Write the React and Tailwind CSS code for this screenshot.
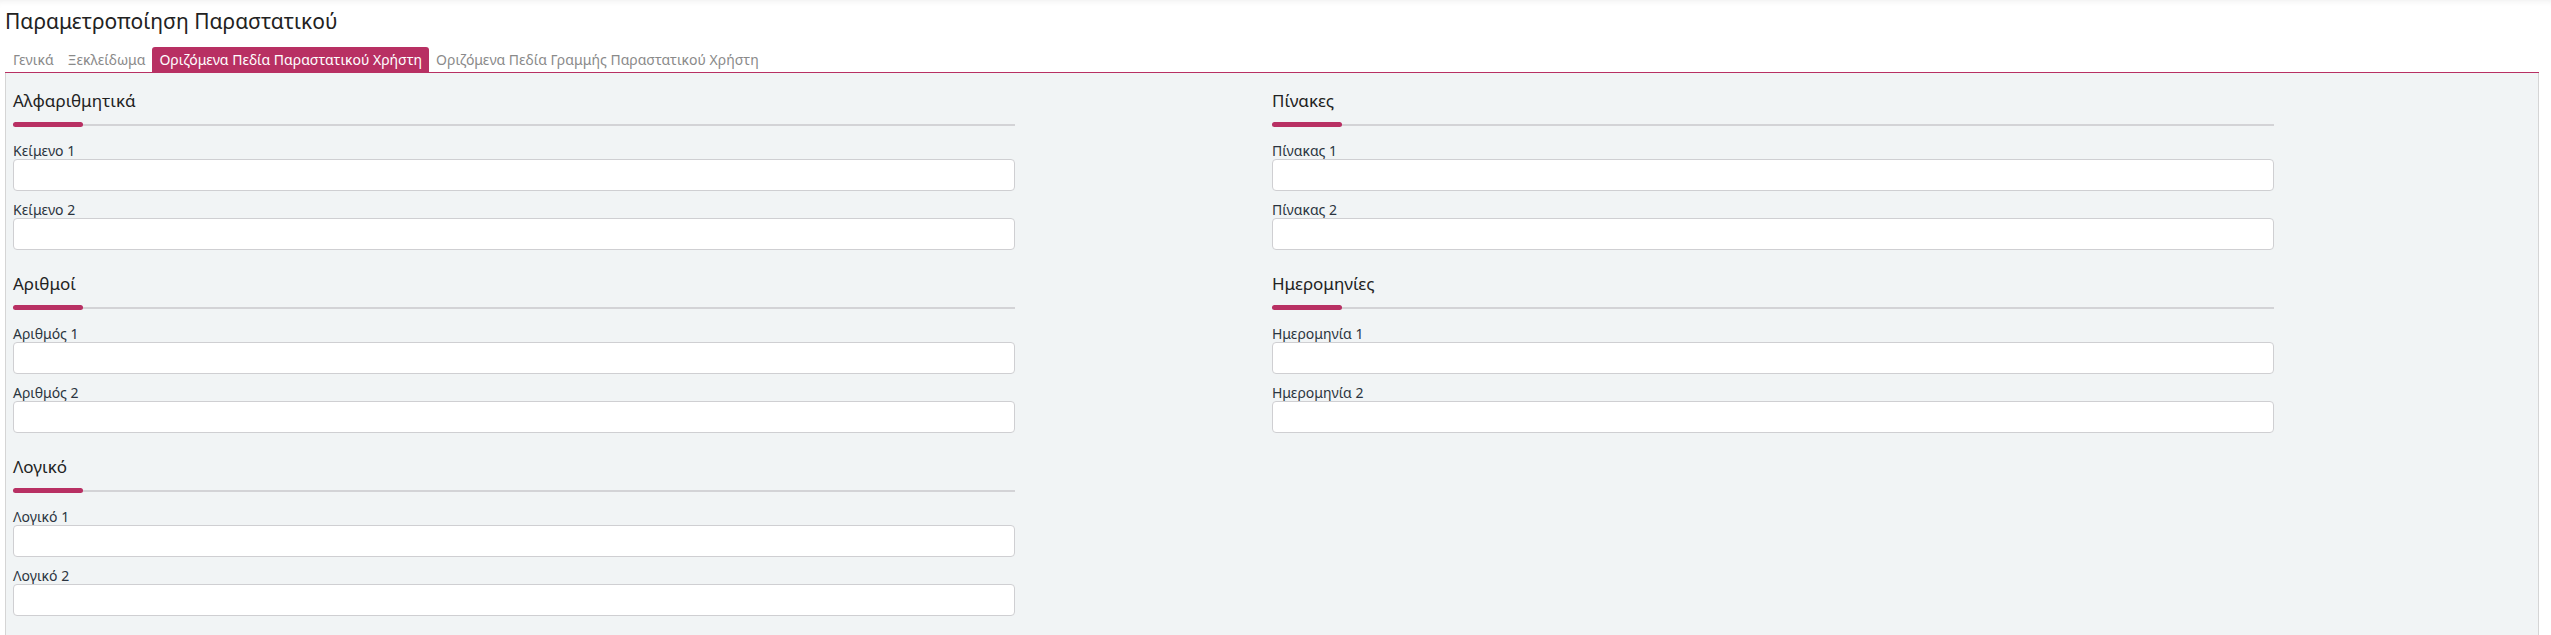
import React from 'react'

const tabs = [
  { label: 'Γενικά' },
  { label: 'Ξεκλείδωμα' },
  { label: 'Οριζόμενα Πεδία Παραστατικού Χρήστη', active: true },
  { label: 'Οριζόμενα Πεδία Γραμμής Παραστατικού Χρήστη' },
]

const leftSections = [
  { title: 'Αλφαριθμητικά', fields: ['Κείμενο 1', 'Κείμενο 2'] },
  { title: 'Αριθμοί', fields: ['Αριθμός 1', 'Αριθμός 2'] },
  { title: 'Λογικό', fields: ['Λογικό 1', 'Λογικό 2'] },
]

const rightSections = [
  { title: 'Πίνακες', fields: ['Πίνακας 1', 'Πίνακας 2'] },
  { title: 'Ημερομηνίες', fields: ['Ημερομηνία 1', 'Ημερομηνία 2'] },
]

// Ενότητα φόρμας: τίτλος, διαχωριστική γραμμή με έμφαση και δύο πεδία
function Section({ title, fields }) {
  return (
    <section className="w-[1002px] pb-[22px]">
      <h3 className="text-[17px] leading-[24px] text-[#222]">{title}</h3>
      <div className="relative mt-[9px] h-[5px] flex items-center">
        <div className="h-[2px] w-full bg-[#d3d3d6]" />
        <div className="absolute left-0 top-0 h-[5px] w-[70px] rounded-full bg-[#b83063]" />
      </div>
      <div className="mt-[15px] flex flex-col gap-[10px]">
        {fields.map((f) => (
          <label key={f} className="flex flex-col">
            <span className="text-[14px] leading-[17px] text-[#2b3440]">{f}</span>
            <input
              type="text"
              className="h-[32px] w-full rounded-[4px] border border-[#cfcfd2] bg-white px-2 text-[14px] outline-none"
            />
          </label>
        ))}
      </div>
    </section>
  )
}

export default function App() {
  return (
    <div
      className="flex min-h-screen flex-col bg-white pl-[5px] pr-[12px] shadow-[inset_0_6px_6px_-5px_rgba(0,0,0,0.07)]"
      style={{ fontFamily: '"Noto Sans", "Open Sans", sans-serif' }}
    >
      <h1 className="pt-[7px] text-[21px] leading-[28px] text-[#222]">Παραμετροποίηση Παραστατικού</h1>

      <nav className="mt-[12px] flex border-b border-[#b83063] pl-[1px]">
        {tabs.map((t) =>
          t.active ? (
            <span
              key={t.label}
              className="rounded-t-[3px] bg-[#b83063] px-[7px] text-[14px] leading-[25px] text-white"
            >
              {t.label}
            </span>
          ) : (
            <span key={t.label} className="px-[7px] text-[14px] leading-[25px] text-[#8a8a8a]">
              {t.label}
            </span>
          )
        )}
      </nav>

      <div className="flex-1 border-x border-[#d5d5d5] bg-[#f1f4f5] px-[7px] pt-[16px]">
        <div className="grid grid-cols-2">
          <div>
            {leftSections.map((s) => (
              <Section key={s.title} {...s} />
            ))}
          </div>
          <div>
            {rightSections.map((s) => (
              <Section key={s.title} {...s} />
            ))}
          </div>
        </div>
      </div>
    </div>
  )
}
